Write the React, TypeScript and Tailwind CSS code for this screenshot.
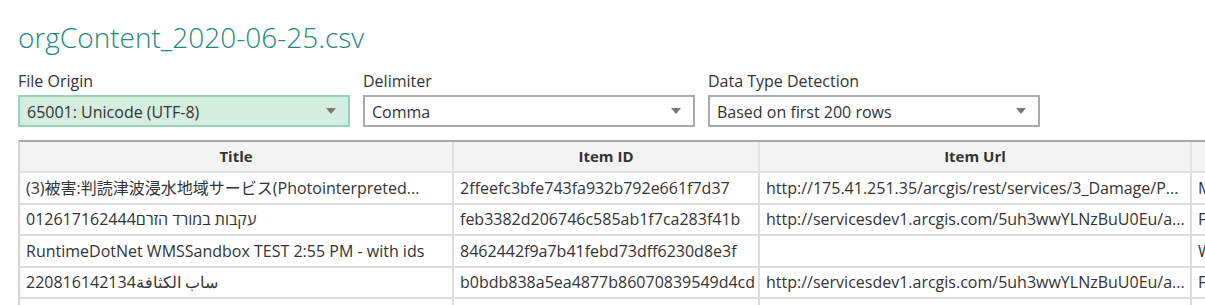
import React from "react"

const font = { fontFamily: '"Open Sans", "Noto Sans CJK JP", sans-serif' }

const rows = [
  {
    title: "(3)被害:判読津波浸水地域サービス(Photointerpreted...",
    id: "2ffeefc3bfe743fa932b792e661f7d37",
    url: "http://175.41.251.35/arcgis/rest/services/3_Damage/P...",
    extra: "M",
  },
  {
    title: "עקבות במורד הזרם012617162444",
    id: "feb3382d206746c585ab1f7ca283f41b",
    url: "http://servicesdev1.arcgis.com/5uh3wwYLNzBuU0Eu/a...",
    extra: "F",
  },
  {
    title: "RuntimeDotNet WMSSandbox TEST 2:55 PM - with ids",
    id: "8462442f9a7b41febd73dff6230d8e3f",
    url: "",
    extra: "W",
  },
  {
    title: "ساب الكثافة220816142134",
    id: "b0bdb838a5ea4877b86070839549d4cd",
    url: "http://servicesdev1.arcgis.com/5uh3wwYLNzBuU0Eu/a...",
    extra: "F",
  },
  { title: "", id: "", url: "", extra: "" },
]

const Select = ({ value, active }: { value: string; active?: boolean }) => (
  <div
    className={`flex h-[32px] w-[332px] items-center justify-between border-2 pl-[7px] pr-[12px] text-[16px] text-[#333] ${
      active ? "border-[#94d4b4] bg-[#d3eee0]" : "border-[#ababab] bg-white"
    }`}
  >
    <span className="pt-[2px]">{value}</span>
    <svg width="10" height="6" viewBox="0 0 10 6">
      <path d="M0 0 L10 0 L5 6 Z" fill="#777" />
    </svg>
  </div>
)

const Field = ({ label, value, active }: { label: string; value: string; active?: boolean }) => (
  <div className="flex flex-col">
    <label className="mb-[4px] text-[16px] leading-[20px] text-[#333]">{label}</label>
    <Select value={value} active={active} />
  </div>
)

export default function App() {
  return (
    <div style={font} className="h-[305px] w-[1205px] overflow-hidden bg-white pl-[18px]">
      <h1 className="pt-[17px] text-[28px] leading-[40px] font-light text-[#24897b]">orgContent_2020-06-25.csv</h1>
      <div className="mt-[14px] flex gap-[13px]">
        <Field label="File Origin" value="65001: Unicode (UTF-8)" active />
        <Field label="Delimiter" value="Comma" />
        <Field label="Data Type Detection" value="Based on first 200 rows" />
      </div>
      <div className="mt-[13px] w-[1300px] border-t-2 border-l-2 border-t-[#a9a9a9] border-l-[#d4d4d4]">
        <div className="flex h-[31px] border-b-2 border-[#e0e0e0] bg-[#f3f3f3] text-[15px] font-bold text-[#333]">
          <div className="flex w-[434px] shrink-0 items-center justify-center border-r-2 border-[#e0e0e0]">Title</div>
          <div className="flex w-[306px] shrink-0 items-center justify-center border-r-2 border-[#e0e0e0]">Item ID</div>
          <div className="flex w-[432px] shrink-0 items-center justify-center border-r-2 border-[#e0e0e0]">Item Url</div>
          <div className="flex-1" />
        </div>
        {rows.map((r, i) => (
          <div key={i} className="flex h-[31.5px] border-b-2 border-[#dcdcdc] text-[16px] text-[#333]">
            <div className="flex w-[434px] shrink-0 items-center overflow-hidden whitespace-nowrap border-r-2 border-[#dcdcdc] pl-[6px]">
              {r.title}
            </div>
            <div className="flex w-[306px] shrink-0 items-center border-r-2 border-[#dcdcdc] pl-[6px]">{r.id}</div>
            <div className="flex w-[432px] shrink-0 items-center overflow-hidden whitespace-nowrap border-r-2 border-[#dcdcdc] pl-[6px]">
              {r.url}
            </div>
            <div className="flex flex-1 items-center pl-[6px]">{r.extra}</div>
          </div>
        ))}
      </div>
    </div>
  )
}
